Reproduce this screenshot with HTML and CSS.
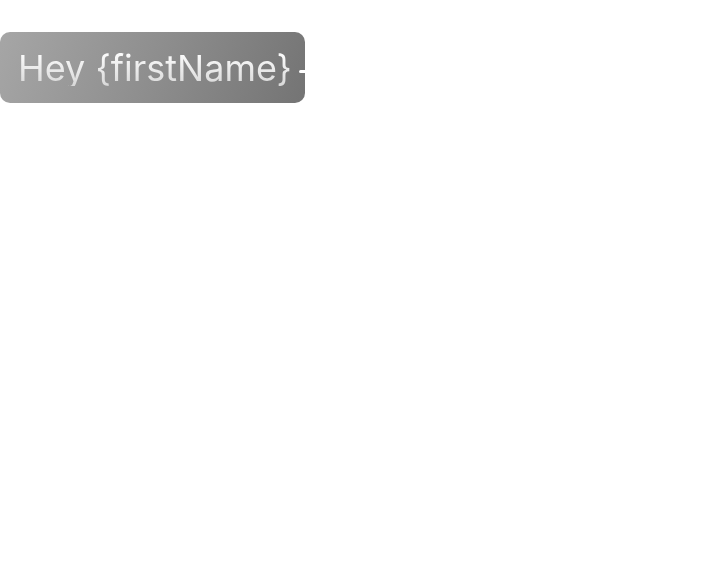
FILE: index.html
```html
<!DOCTYPE html>
<html>
<head>
<meta charset="utf-8">
<link rel="stylesheet" href="styles.css">
</head>
<body>
<div class="chip">
  <span class="label">Hey {firstName}</span>
  <span class="dash"></span>
</div>
</body>
</html>
```
FILE: styles.css
```css
html, body { margin: 0; padding: 0; background: #fff; }
body { padding-top: 32px; font-family: Inter, "Noto Sans", sans-serif; }
.chip {
  display: inline-flex;
  align-items: center;
  box-sizing: border-box;
  height: 71px;
  width: 305px;
  padding-left: 18px;
  padding-top: 1px;
  border-radius: 10px;
  background: linear-gradient(110deg, #a6a6a6 0%, #8e8e8e 50%, #747474 100%);
  position: relative;
}
.label {
  font-size: 36px;
  line-height: 1;
  font-weight: 420;
  background: linear-gradient(180deg, #ffffff 0%, #d8d8d8 100%);
  -webkit-background-clip: text;
  background-clip: text;
  color: transparent;
  white-space: nowrap;
}
.dash {
  position: absolute;
  left: 299px;
  top: 38px;
  width: 8px;
  height: 3px;
  border-radius: 2px;
  background: #fff;
}
```
